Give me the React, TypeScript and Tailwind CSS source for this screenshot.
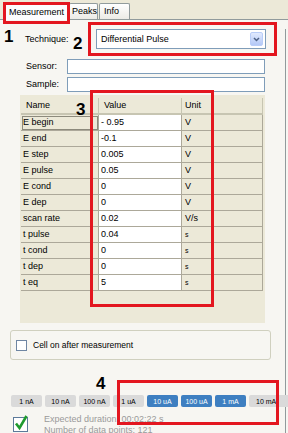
import React from 'react';

const PARAMS = [
  { name: 'E begin', value: '- 0.95', unit: 'V' },
  { name: 'E end', value: '-0.1', unit: 'V' },
  { name: 'E step', value: '0.005', unit: 'V' },
  { name: 'E pulse', value: '0.05', unit: 'V' },
  { name: 'E cond', value: '0', unit: 'V' },
  { name: 'E dep', value: '0', unit: 'V' },
  { name: 'scan rate', value: '0.02', unit: 'V/s' },
  { name: 't pulse', value: '0.04', unit: 's' },
  { name: 't cond', value: '0', unit: 's' },
  { name: 't dep', value: '0', unit: 's' },
  { name: 't eq', value: '5', unit: 's' },
];

const RANGES = [
  { label: '1 nA', on: false },
  { label: '10 nA', on: false },
  { label: '100 nA', on: false },
  { label: '1 uA', on: false },
  { label: '10 uA', on: true },
  { label: '100 uA', on: true },
  { label: '1 mA', on: true },
  { label: '10 mA', on: false },
];

export default function App() {
  return (
    <div className="relative w-[288px] h-[433px] overflow-hidden bg-[#F7F6F2] text-black text-[9px] leading-none font-['Liberation_Sans',Arial,sans-serif]">
      {/* Tabs */}
      <div className="h-[20px] bg-[#ECE9D8] flex items-end pl-[5px] border-b border-[#919B9C]">
        <div className="w-[64px] h-[18px] -mb-px bg-[#FCFCFE] border border-b-0 border-[#919B9C] border-t-2 border-t-[#FFC83C] rounded-t-[2px] flex items-center pl-[3px]">
          Measurement
        </div>
        <div className="w-[29px] h-[16px] bg-gradient-to-b from-white to-[#ECEBE6] border border-b-0 border-[#919B9C] rounded-t-[2px] flex items-center pl-[2px]">
          Peaks
        </div>
        <div className="w-[31px] h-[16px] ml-[1px] bg-gradient-to-b from-white to-[#ECEBE6] border border-b-0 border-[#919B9C] rounded-t-[2px] flex items-center pl-[4px]">
          Info
        </div>
      </div>

      <div className="border-r border-[#919B9C] w-[286px] h-[413px]">
        {/* Technique */}
        <div className="flex items-center mt-[9px]">
          <span className="ml-[25px] w-[71px]">Technique:</span>
          <div className="w-[170px] h-[20px] bg-white border border-[#7F9DB9] flex items-center justify-between pl-[4px] pr-[2px]">
            <span>Differential Pulse</span>
            <div className="w-[13px] h-[14px] rounded-[2px] bg-gradient-to-b from-[#E1EAFE] to-[#B4C8F6] border border-[#B9CDF8] flex items-center justify-center">
              <svg width="7" height="5" viewBox="0 0 7 5">
                <path d="M1 1 L3.5 3.5 L6 1" fill="none" stroke="#4D6185" strokeWidth="1.5" />
              </svg>
            </div>
          </div>
        </div>

        {/* Sensor / Sample */}
        <div className="flex items-center mt-[10px]">
          <span className="ml-[26px] w-[41px]">Sensor:</span>
          <div className="w-[198px] h-[15px] bg-white border border-[#7F9DB9]" />
        </div>
        <div className="flex items-center mt-[3px]">
          <span className="ml-[26px] w-[41px]">Sample:</span>
          <div className="w-[198px] h-[15px] bg-white border border-[#7F9DB9]" />
        </div>

        {/* Parameter grid */}
        <div className="mt-[3px] ml-[20px] w-[245px] h-[228px] bg-[#ECE9D8] pt-[3px] pl-[1px]">
          <div className="flex h-[17px]">
            <div className="w-[78px] border-r border-b-2 border-[#C7C5B2] flex items-center pl-[5px]">Name</div>
            <div className="w-[83px] border-r border-b-2 border-[#C7C5B2] flex items-center pl-[5px]">Value</div>
            <div className="w-[81px] border-r border-b-2 border-[#C7C5B2] flex items-center pl-[3px]">Unit</div>
          </div>
          {PARAMS.map((p, i) => (
            <div key={p.name} className="flex h-[16px]">
              <div className={`w-[78px] border-r border-b border-[#ACA899] flex items-center pl-[2px] ${i === 0 ? 'outline outline-1 -outline-offset-2 outline-[#8C8A7C]' : ''}`}>
                {p.name}
              </div>
              <div className="w-[83px] bg-white border-r border-b border-[#ACA899] flex items-center pl-[2px]">{p.value}</div>
              <div className={`w-[81px] border-r border-b border-[#ACA899] flex items-center pl-[3px] ${p.unit === 's' ? 'text-[7px]' : ''}`}>
                {p.unit}
              </div>
            </div>
          ))}
        </div>

        {/* Cell on */}
        <div className="mt-[7px] ml-[10px] w-[261px] h-[30px] border border-[#D0D0BF] rounded-[3px] flex items-center pl-[5px]">
          <div className="w-[11px] h-[11px] bg-white border border-[#6F86A3]" />
          <span className="ml-[6px] text-[8.5px]">Cell on after measurement</span>
        </div>

        {/* Current ranges */}
        <div className="mt-[35px] ml-[11px] flex gap-[3px]">
          {RANGES.map((r, i) => (
            <div
              key={r.label}
              className={`${i === RANGES.length - 1 ? 'w-[42px] justify-start pl-[7px]' : 'w-[31px] justify-center'} h-[12px] shrink-0 rounded-[2px] flex items-center text-[7px] ${
                r.on ? 'bg-[#3E7FC1] text-white' : 'bg-[#DADADA] text-black'
              }`}
            >
              {r.label}
            </div>
          ))}
        </div>

        {/* Status */}
        <div className="mt-[7px] flex">
          <div className="ml-[13px] w-[15px] h-[18px] shrink-0">
            <svg width="15" height="18" viewBox="0 0 15 18">
              <rect x="0.5" y="3.5" width="14" height="14" fill="white" stroke="#5C7A9A" />
              <path d="M3 9.5 L6.5 14 L13.5 2" fill="none" stroke="#1E9A2E" strokeWidth="2.6" />
            </svg>
          </div>
          <div className="ml-[16px] text-[#9A9A9A] leading-[11px]">
            <div>Expected duration: 00:02:22 s</div>
            <div>Number of data points: 121</div>
          </div>
        </div>
      </div>

      {/* Annotations */}
      <div className="absolute left-[3px] top-[2px] w-[67px] h-[22px] border-[3px] border-[#E3161F]" />
      <div className="absolute left-[88px] top-[22px] w-[189px] h-[34px] border-[3px] border-[#E3161F]" />
      <div className="absolute left-[90px] top-[90px] w-[124px] h-[217px] border-[3px] border-[#E3161F]" />
      <div className="absolute left-[117px] top-[380px] w-[162px] h-[45px] border-[3px] border-[#E3161F]" />
      <span className="absolute left-[4px] top-[28px] text-[17px] font-bold">1</span>
      <span className="absolute left-[73px] top-[35px] text-[17px] font-bold">2</span>
      <span className="absolute left-[76px] top-[101px] text-[17px] font-bold">3</span>
      <span className="absolute left-[96px] top-[375px] text-[17px] font-bold">4</span>
    </div>
  );
}
